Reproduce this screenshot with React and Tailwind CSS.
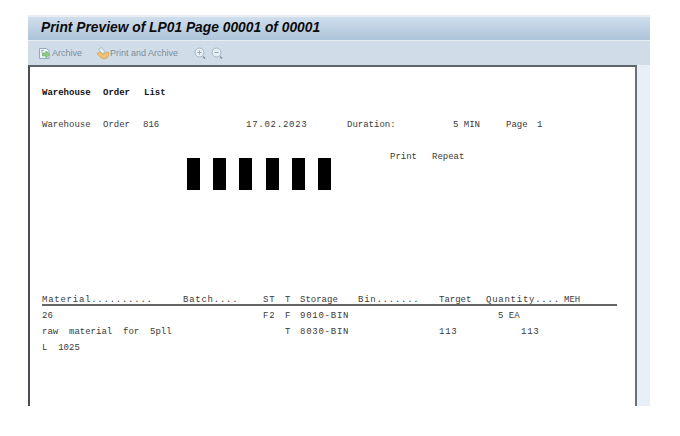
import { Fragment } from 'react';

const mono = "font-['Liberation_Mono',monospace] text-[9px] leading-[10px] text-[#3a3a3a] whitespace-pre";
const wide = 'tracking-[0.75px]';

const rows = [
  ['26', '', 'F2', 'F', '9010-BIN', '', '', '5 EA', '', 'pl-3'],
  ['raw  material  for  5pll', '', '', 'T', '8030-BIN', '', '113', '113', '', 'pl-[35px]'],
];

function ArchiveIcon() {
  return (
    <svg width="13" height="13" viewBox="0 0 13 13" className="mr-px">
      <path d="M1.500 1.500h7l2.500 2v8h-9.500z" fill="#eef3f7" stroke="#93a9bc" />
      <path d="M3 3.500h3M3 5h2" stroke="#a9bac8" />
      <path d="M4.500 6h3.500V4l4 3.500-4 3.500V9H4.500z" fill="#8ccb80" stroke="#66a85f" strokeWidth="0.6" />
    </svg>
  );
}

function PrintArchiveIcon() {
  return (
    <svg width="14" height="13" viewBox="0 0 14 13">
      <path d="M2.500 2l3.500-1.500 3 4.500-3 2z" fill="#e3ebf1" stroke="#a4b6c5" strokeWidth="0.8" />
      <path d="M1 6.500l3-1.500 3.500 2.500 3-2.500 2.500 1-1.500 4.500-3.500 1.500-3.500-1.500z" fill="#f0c27c" stroke="#d79c48" strokeWidth="0.8" />
    </svg>
  );
}

function ZoomIcon({ plus }) {
  return (
    <svg width="12" height="13" viewBox="0 0 12 13">
      <circle cx="5.500" cy="5.500" r="4.500" fill="#e6eef4" stroke="#a3b7c7" />
      <path d="M3.500 5.500h4" stroke="#93a9bb" />
      {plus && <path d="M5.500 3.500v4" stroke="#93a9bb" />}
      <path d="M9 9.500l2 2" stroke="#7b8d9c" strokeWidth="1.400" />
    </svg>
  );
}

export default function App() {
  return (
    <div className="h-[436px] w-[680px] overflow-hidden bg-white pt-[15px] pl-7">
      <div className="flex h-[391px] w-[622px] flex-col">
        <div className="h-0.5 bg-[#e9eef3]" />
        <div className="flex h-[23px] items-center bg-gradient-to-b from-[#d0deec] to-[#adc4da] pb-0.5 pl-[13px]">
          <h1 className="font-['Liberation_Sans',sans-serif] text-[13.800px] leading-none font-bold text-[#0c0c0c] italic">
            Print Preview of LP01 Page 00001 of 00001
          </h1>
        </div>
        <div className="flex h-[25px] items-center border-t border-[#e6edf3] bg-[#d0dde8] pl-2.5 font-['Liberation_Sans',sans-serif] text-[9px] leading-none text-[#7d8c99]">
          <ArchiveIcon />
          <span>Archive</span>
          <span className="ml-[14px]"><PrintArchiveIcon /></span>
          <span>Print and Archive</span>
          <span className="ml-[16px]"><ZoomIcon plus /></span>
          <span className="ml-[5px]"><ZoomIcon /></span>
        </div>
        <div className="flex min-h-0 flex-1">
          <main className="h-full w-[609px] border-t-2 border-r-2 border-l-2 border-t-[#5e6469] border-r-[#6b7074] border-l-[#4a4e52] bg-white pt-[21px] pl-3">
            <div className={`${mono} grid grid-cols-[61px_41px_auto] font-bold text-[#111]`}>
              <span>Warehouse</span>
              <span>Order</span>
              <span>List</span>
            </div>

            <div className={`${mono} mt-[22px] grid grid-cols-[61px_40px_103px_101px_106px_53px_31px_auto]`}>
              <span>Warehouse</span>
              <span>Order</span>
              <span>816</span>
              <span className={wide}>17.02.2023</span>
              <span>Duration:</span>
              <span>5 MIN</span>
              <span>Page</span>
              <span>1</span>
            </div>

            <div className={`${mono} mt-[22px] grid grid-cols-[42px_auto] pl-[348px]`}>
              <span>Print</span>
              <span>Repeat</span>
            </div>

            <div className="mt-[-4px] ml-[145px] flex gap-[13.200px]">
              <div className="h-8 w-[13px] bg-black" />
              <div className="h-8 w-[13px] bg-black" />
              <div className="h-8 w-[13px] bg-black" />
              <div className="h-8 w-[13px] bg-black" />
              <div className="h-8 w-[13px] bg-black" />
              <div className="h-8 w-[13px] bg-black" />
            </div>

            <div className="mt-[105px] w-[575px]">
              <div className={`${mono} grid h-[11px] grid-cols-[141px_80px_22px_15px_58px_81px_47px_78px_auto] border-b-2 border-[#666]`}>
                <span className={wide}>Material..........</span>
                <span className={wide}>Batch....</span>
                <span className={wide}>ST</span>
                <span>T</span>
                <span>Storage</span>
                <span className={wide}>Bin.......</span>
                <span>Target</span>
                <span className={wide}>Quantity....</span>
                <span>MEH</span>
              </div>
              <div className={`${mono} mt-[5px] grid grid-cols-[141px_80px_22px_15px_58px_81px_47px_78px_auto] gap-y-[6px] [&>span]:h-[10px]`}>
                {rows.map((r) => (
                  <Fragment key={r[0]}>
                    <span>{r[0]}</span>
                    <span>{r[1]}</span>
                    <span className={wide}>{r[2]}</span>
                    <span>{r[3]}</span>
                    <span className={wide}>{r[4]}</span>
                    <span>{r[5]}</span>
                    <span className={wide}>{r[6]}</span>
                    <span className={`${r[9]} ${r[6] ? wide : ''}`}>{r[7]}</span>
                    <span>{r[8]}</span>
                  </Fragment>
                ))}
                <span className="col-span-9">L  1025</span>
              </div>
            </div>
          </main>
          <div className="flex-1 bg-[#e8eff6]" />
        </div>
      </div>
    </div>
  );
}
